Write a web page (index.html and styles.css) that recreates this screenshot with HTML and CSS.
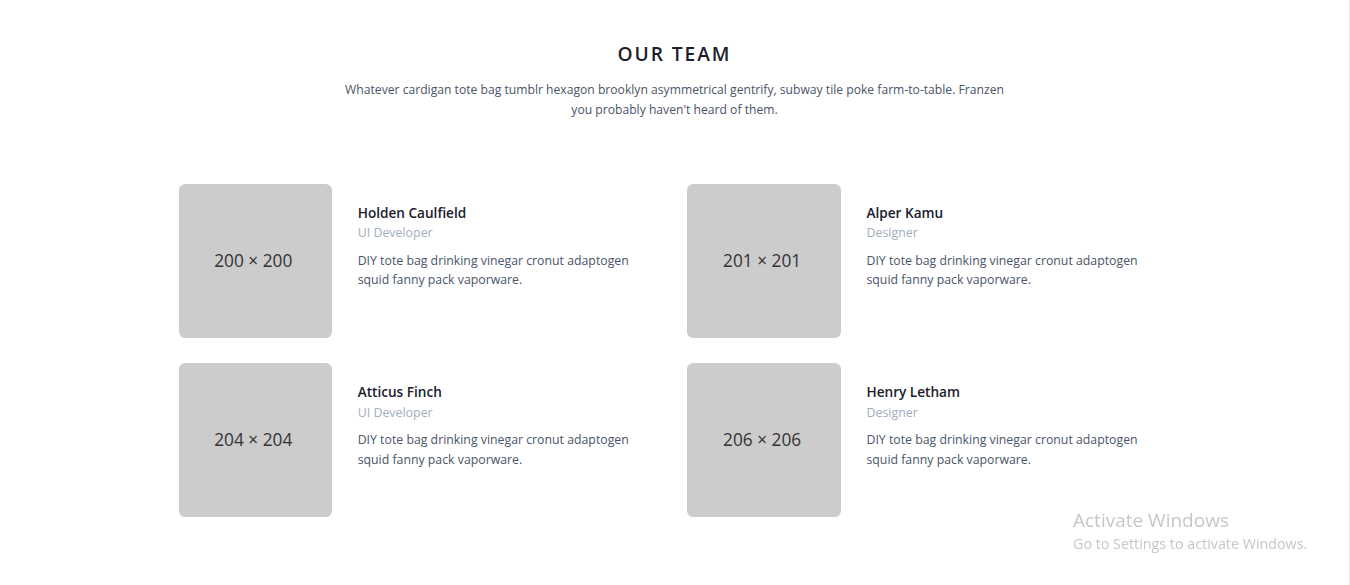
FILE: index.html
```html
<!DOCTYPE html>
<html lang="en">
<head>
<meta charset="utf-8">
<title>Our Team</title>
<link rel="stylesheet" href="styles.css">
</head>
<body>
<section class="team">
  <div class="container">
    <div class="intro">
      <h1 class="title">OUR TEAM</h1>
      <p class="lead">Whatever cardigan tote bag tumblr hexagon brooklyn asymmetrical gentrify, subway tile poke farm-to-table. Franzen you probably haven't heard of them.</p>
    </div>
    <div class="grid">
      <div class="cell">
        <div class="card">
          <div class="photo">200 × 200</div>
          <div class="info">
            <h2 class="name">Holden Caulfield</h2>
            <h3 class="role">UI Developer</h3>
            <p class="bio">DIY tote bag drinking vinegar cronut adaptogen squid fanny pack vaporware.</p>
          </div>
        </div>
      </div>
      <div class="cell">
        <div class="card">
          <div class="photo">201 × 201</div>
          <div class="info">
            <h2 class="name">Alper Kamu</h2>
            <h3 class="role">Designer</h3>
            <p class="bio">DIY tote bag drinking vinegar cronut adaptogen squid fanny pack vaporware.</p>
          </div>
        </div>
      </div>
      <div class="cell">
        <div class="card">
          <div class="photo">204 × 204</div>
          <div class="info">
            <h2 class="name">Atticus Finch</h2>
            <h3 class="role">UI Developer</h3>
            <p class="bio">DIY tote bag drinking vinegar cronut adaptogen squid fanny pack vaporware.</p>
          </div>
        </div>
      </div>
      <div class="cell">
        <div class="card">
          <div class="photo">206 × 206</div>
          <div class="info">
            <h2 class="name">Henry Letham</h2>
            <h3 class="role">Designer</h3>
            <p class="bio">DIY tote bag drinking vinegar cronut adaptogen squid fanny pack vaporware.</p>
          </div>
        </div>
      </div>
    </div>
  </div>
</section>
<div class="watermark">
  <div class="wm-title">Activate Windows</div>
  <div class="wm-sub">Go to Settings to activate Windows.</div>
</div>
<div class="edge"></div>
</body>
</html>
```

FILE: styles.css
```css
* { box-sizing: border-box; }
html, body { margin: 0; padding: 0; background: #fff; }
body {
  font-family: "Open Sans", "Noto Sans", "Liberation Sans", sans-serif;
  color: #4a5568;
  width: 1349px;
}
.team { padding: 41px 0 60px; }
.container {
  width: 1024px;
  margin: 0 auto;
  padding: 0 16px;
}
.intro { text-align: center; margin-bottom: 63.8px; }
.title {
  margin: 0 0 13.6px;
  font-size: 19.2px;
  line-height: 25.6px;
  font-weight: 600;
  letter-spacing: 0.1em;
  color: #1a202c;
}
.lead {
  margin: 0 auto;
  width: 666px;
  font-size: 12.15px;
  line-height: 20px;
}
.grid {
  display: flex;
  flex-wrap: wrap;
  margin: -12.8px;
}
.cell { width: 50%; padding: 12.8px; }
.card { display: flex; align-items: center; }
.photo {
  flex-shrink: 0;
  width: 153.6px;
  height: 153.6px;
  border-radius: 6.4px;
  background: #cccccc;
  color: #333;
  display: flex;
  align-items: center;
  justify-content: center;
  font-size: 17.3px;
  font-weight: 400;
  padding: 0 4px 1px 0;
}
.info { flex-grow: 1; padding-left: 25.6px; padding-bottom: 19.2px; }
.name {
  margin: 2px 0 0;
  font-size: 13.6px;
  line-height: 21.4px;
  font-weight: 600;
  color: #1a202c;
}
.role {
  margin: 0 0 8.6px;
  font-size: 12.4px;
  line-height: 19.2px;
  font-weight: 400;
  color: #a0aec0;
}
.bio {
  margin: 0 0 12.8px;
  font-size: 12.3px;
  line-height: 19.2px;
  width: 290px;
}
.watermark {
  position: fixed;
  left: 1073px;
  top: 508px;
  color: rgba(160,160,160,0.6);
  font-family: "Open Sans", "Noto Sans", sans-serif;
}
.wm-title { font-size: 19px; line-height: 25px; }
.wm-sub { font-size: 14.3px; line-height: 21px; }
.edge {
  position: fixed;
  top: 0;
  right: 0;
  width: 1px;
  height: 100%;
  background: #e8e8e8;
}
```
